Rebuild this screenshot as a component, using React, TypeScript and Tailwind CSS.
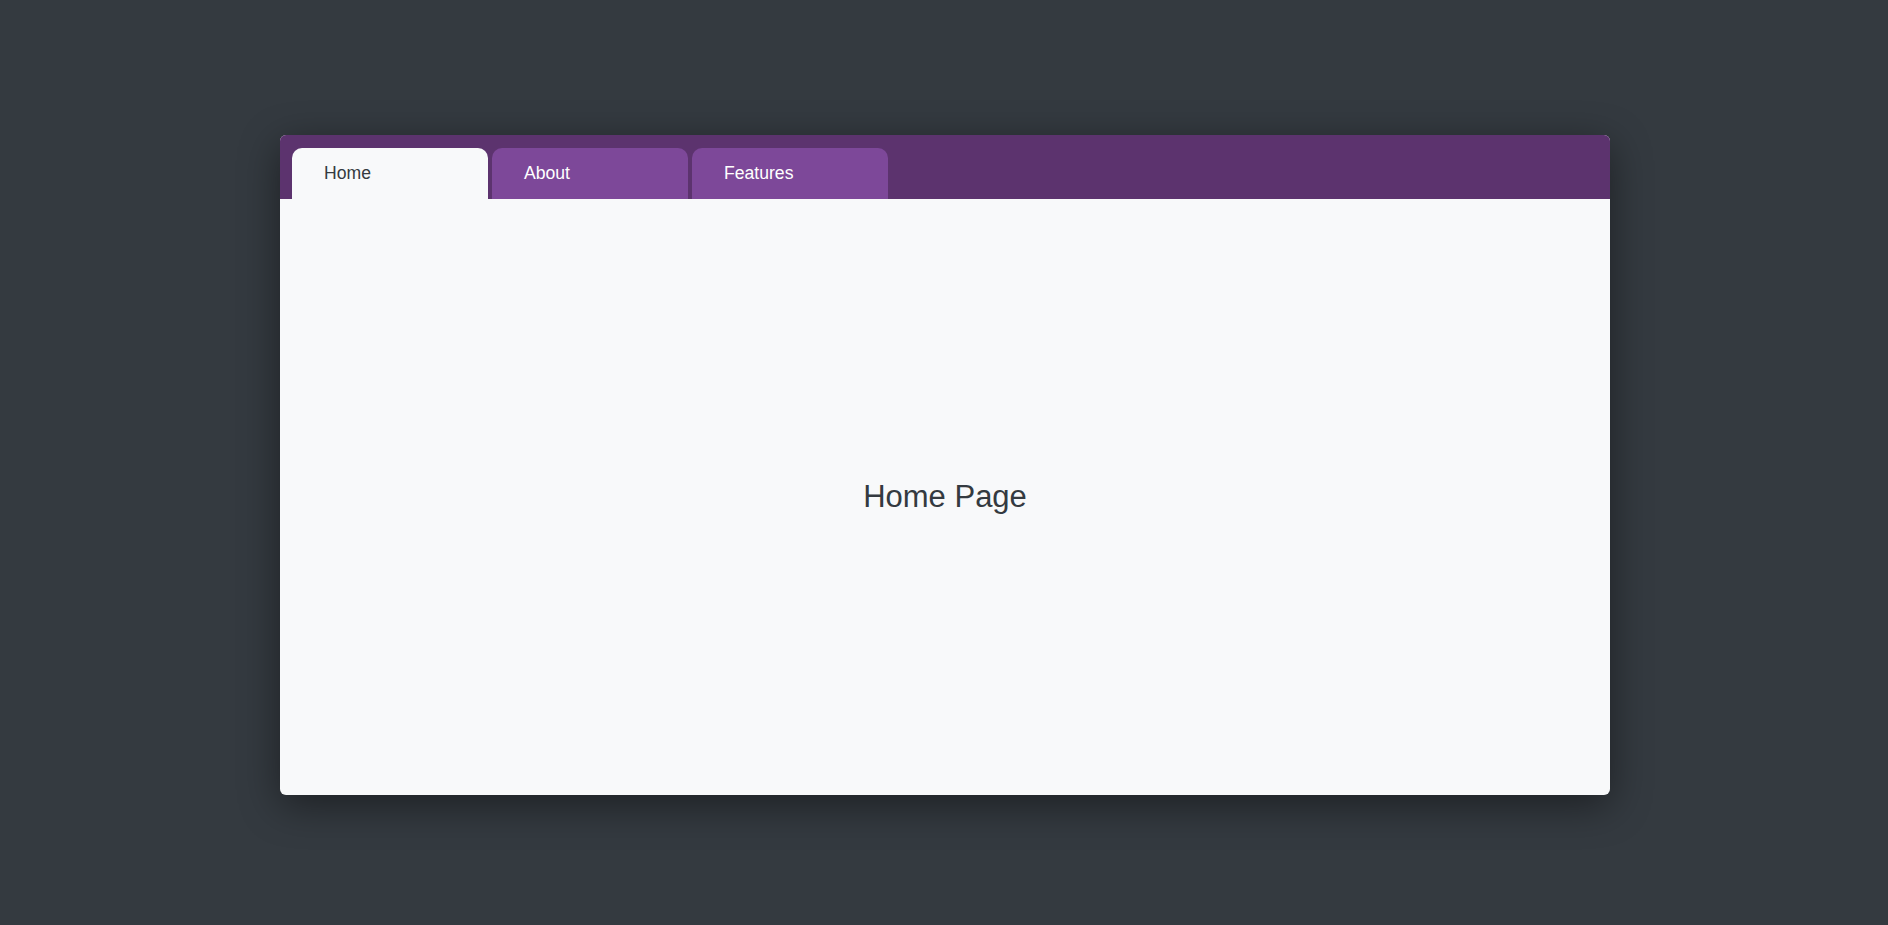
import React, { useState } from "react";

const tabs = ["Home", "About", "Features"];

export default function App() {
  const [active, setActive] = useState("Home");

  return (
    <div
      className="min-h-screen w-full bg-[#343a40] flex items-center justify-center"
      style={{ fontFamily: '"Liberation Sans", Arial, sans-serif' }}
    >
      <div className="w-[1330px] h-[660px] mt-[5px] ml-[2px] flex flex-col rounded-md overflow-hidden bg-[#f8f9fa] shadow-[0_10px_40px_rgba(0,0,0,0.45)]">
        {/* Tab strip */}
        <div className="flex items-end gap-1 bg-[#5c336e] pt-[13px] px-[12px]">
          {tabs.map((t) => (
            <button
              key={t}
              onClick={() => setActive(t)}
              className={`w-[196px] h-[51px] rounded-t-[10px] pl-[32px] text-left text-[17.6px] ${
                active === t ? "bg-[#f8f9fa] text-[#343a40]" : "bg-[#7d4899] text-white"
              }`}
            >
              {t}
            </button>
          ))}
        </div>

        {/* Page body */}
        <div className="flex-1 flex items-center justify-center">
          <h1 className="text-[31px] text-[#343a40]">{active} Page</h1>
        </div>
      </div>
    </div>
  );
}
